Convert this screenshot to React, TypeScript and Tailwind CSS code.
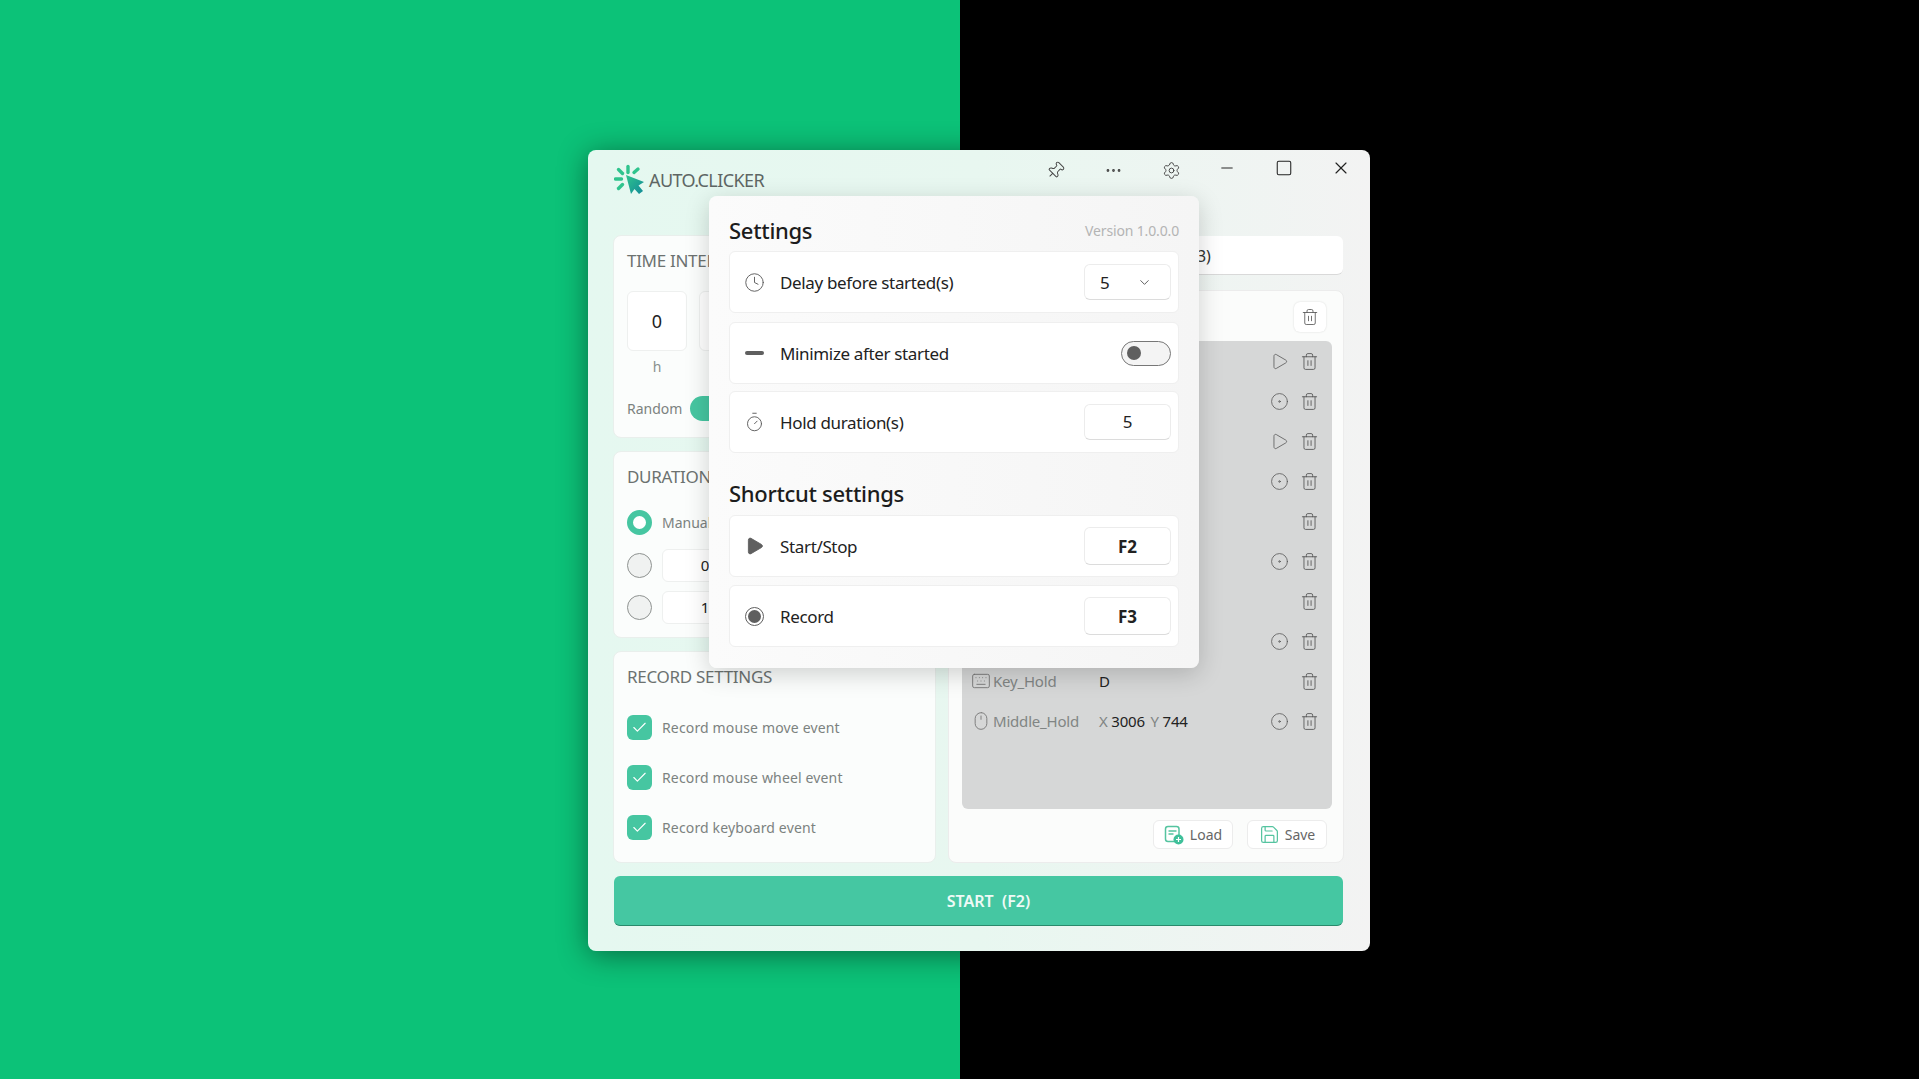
import { Check, ChevronDown, CircleDot, Clock, Ellipsis, Keyboard, Minus, Mouse, Pin, Play, Save, Settings, Square, Timer, Trash2, X } from 'lucide-react';

const rows = [
  { action: 'play' },
  { action: 'target' },
  { action: 'play' },
  { action: 'target' },
  { action: 'none' },
  { action: 'target' },
  { action: 'none' },
  { action: 'target' },
  { action: 'none', icon: 'key', name: 'Key_Hold', key: 'D' },
  { action: 'target', icon: 'mouse', name: 'Middle_Hold', x: 3006, y: 744 },
];

function Logo() {
  return (
    <svg width="32" height="32" viewBox="0 0 32 32">
      <defs>
        <linearGradient id="logo" x1="0" y1="0" x2="1" y2="1">
          <stop offset="0" stopColor="#2fc48d" />
          <stop offset="1" stopColor="#128a98" />
        </linearGradient>
      </defs>
      <g stroke="#2fc48d" strokeWidth="3.4" strokeLinecap="round">
        <path d="M14 2.5v6" />
        <path d="M4.5 5.5l4 4" />
        <path d="M24 5l-4 3.5" />
        <path d="M1.5 15h6" />
        <path d="M4.5 24.5l4-4" />
      </g>
      <path d="M12 11l18 7-5.5 3.5 4.5 5.5-4 3-4.5-5-3.5 5z" fill="url(#logo)" />
    </svg>
  );
}

function LoadIcon() {
  return (
    <svg width="20" height="20" viewBox="0 0 20 20" fill="none">
      <rect x="1.5" y="1.5" width="13.5" height="15" rx="2.5" stroke="#55c4a0" strokeWidth="1.5" />
      <path d="M4.5 6h8M4.5 9h5" stroke="#55c4a0" strokeWidth="1.5" />
      <circle cx="14.5" cy="14.5" r="5" fill="#3fc09a" />
      <path d="M14.5 12v5M12 14.5h5" stroke="#fff" strokeWidth="1.2" />
    </svg>
  );
}

function Card({ title, className, children }: { title: string; className: string; children: React.ReactNode }) {
  return (
    <div className={`rounded-lg border border-[#e9efec] bg-[#fbfdfc] px-[13px] ${className}`}>
      <div className="pt-[12px] text-[17px] leading-[26px] tracking-[-0.3px] text-[#6c7270]">{title}</div>
      {children}
    </div>
  );
}

function CheckRow({ label }: { label: string }) {
  return (
    <div className="flex items-center gap-[10px]">
      <span className="flex h-[25px] w-[25px] items-center justify-center rounded-md bg-[#46c6a1]">
        <Check className="h-[17px] w-[17px] text-white" strokeWidth={1.6} />
      </span>
      <span className="text-[14px] tracking-[0.15px] text-[#7b8280]">{label}</span>
    </div>
  );
}

function SettingRow({ icon, label, children, className }: { icon: React.ReactNode; label: string; children: React.ReactNode; className: string }) {
  return (
    <div className={`flex h-[62px] items-center rounded-md border border-[#efefef] bg-white pl-[14px] pr-[7px] ${className}`}>
      <span className="flex w-[21px] justify-center text-[#5f5f5f]">{icon}</span>
      <span className="ml-[15px] flex-1 pt-[1px] text-[17px] tracking-[-0.35px] text-[#222]">{label}</span>
      {children}
    </div>
  );
}

function ValueBox({ children, className }: { children: React.ReactNode; className: string }) {
  return (
    <div className={`flex w-[87px] items-center rounded-md border border-[#ececec] border-b-[#dcdcdc] bg-white text-[17px] text-[#222] ${className}`}>
      {children}
    </div>
  );
}

export default function App() {
  return (
    <div className="relative flex h-[1079px] w-full overflow-hidden font-['Noto_Sans',sans-serif]">
      <div className="h-full w-[960px] bg-[#0cc278]" />
      <div className="h-full flex-1 bg-black" />

      <div className="absolute left-[588px] top-[150px] h-[801px] w-[782px] rounded-lg bg-gradient-to-r from-[#e5f8f0] via-[#e8f7f0] to-[#f3f3f3] pl-[25px] pr-[26px] shadow-[0_4px_30px_rgba(0,0,0,0.45)]">
        <div className="flex h-[85px] items-start">
          <div className="ml-[1px] mt-[14px] flex items-center gap-[3px]">
            <Logo />
            <span className="text-[18px] tracking-[-0.6px] text-[#5e6664]">AUTO.CLICKER</span>
          </div>
          <div className="ml-[282px] mt-[11px] flex items-center gap-[39px] text-[#444]">
            <Pin className="h-[19px] w-[19px] rotate-45" strokeWidth={1.2} />
            <Ellipsis className="h-[19px] w-[19px]" strokeWidth={1.5} />
            <Settings className="h-[19px] w-[19px]" strokeWidth={1.2} />
          </div>
          <div className="ml-[37px] mt-[8px] flex items-center gap-[39px] text-[#222]">
            <Minus className="h-[18px] w-[18px]" strokeWidth={1.3} />
            <Square className="h-[18px] w-[18px]" strokeWidth={1.4} />
            <X className="-ml-[1px] h-[20px] w-[20px]" strokeWidth={1.4} />
          </div>
        </div>

        <div className="flex h-[628px] gap-[12px]">
          <div className="flex w-[323px] flex-col gap-[13px]">
            <Card title="TIME INTERVAL" className="h-[203px]">
              <div className="mt-[17px] flex gap-[12px]">
                {['h', 'm', 's'].map((unit, i) => (
                  <div key={unit} className="flex flex-col items-center">
                    <div className="flex h-[60px] w-[60px] items-center justify-center rounded-md border border-[#eef0ef] bg-white text-[18px] text-[#222]">0</div>
                    <span className="mt-[5px] text-[14px] text-[#8a908e]">{i === 0 ? unit : ''}</span>
                  </div>
                ))}
              </div>
              <div className="mt-[19px] flex items-center gap-[8px]">
                <span className="text-[14px] text-[#7b8280]">Random</span>
                <span className="h-[25px] w-[50px] rounded-full bg-[#46c6a1]" />
              </div>
            </Card>

            <Card title="DURATION" className="h-[187px]">
              <div className="mt-[20px] flex flex-col gap-[9px]">
                <div className="mb-[5px] flex h-[25px] items-center gap-[10px]">
                  <span className="h-[25px] w-[25px] rounded-full border-[6px] border-[#46c6a1] bg-white" />
                  <span className="text-[14px] text-[#7b8280]">Manual</span>
                </div>
                <div className="flex items-center gap-[10px]">
                  <span className="h-[25px] w-[25px] rounded-full border border-[#8f9391] bg-[#f0f2f1]" />
                  <div className="flex h-[33px] w-[86px] items-center justify-center rounded-md border border-[#eef0ef] bg-white text-[15px] text-[#222]">0</div>
                </div>
                <div className="flex items-center gap-[10px]">
                  <span className="h-[25px] w-[25px] rounded-full border border-[#8f9391] bg-[#f0f2f1]" />
                  <div className="flex h-[33px] w-[86px] items-center justify-center rounded-md border border-[#eef0ef] bg-white text-[15px] text-[#222]">1</div>
                </div>
              </div>
            </Card>

            <Card title="RECORD SETTINGS" className="h-[212px]">
              <div className="mt-[25px] flex flex-col gap-[25px]">
                <CheckRow label="Record mouse move event" />
                <CheckRow label="Record mouse wheel event" />
                <CheckRow label="Record keyboard event" />
              </div>
            </Card>
          </div>

          <div className="mt-[1px] flex flex-1 flex-col gap-[15px]">
            <div className="mr-[1px] flex h-[39px] items-center justify-center rounded-md border-b border-[#d9d9d9] bg-white pr-[13px] pt-[1px] text-[16px] text-[#333]">START RECORD (F3)</div>
            <div className="flex flex-1 flex-col rounded-lg border border-[#ececec] bg-[#fbfcfb] pl-[13px] pr-[11px]">
              <div className="flex h-[50px] items-center justify-end pr-[6px]">
                <span className="mt-[1px] flex h-[30px] w-[32px] items-center justify-center rounded-md bg-white shadow-[0_0_2px_rgba(0,0,0,0.15)]">
                  <Trash2 className="h-[18px] w-[18px] text-[#555]" strokeWidth={1.1} />
                </span>
              </div>
              <div className="flex h-[468px] flex-col rounded-md bg-[#d6d7d7] pl-[9px] pr-[13px]">
                {rows.map((row, i) => (
                  <div key={i} className="flex h-[40px] items-center text-[15px]">
                    <span className="flex w-[20px] justify-center text-[#777]">
                      {row.icon === 'key' && <Keyboard className="h-[20px] w-[20px]" strokeWidth={1.1} />}
                      {row.icon === 'mouse' && <Mouse className="h-[20px] w-[20px]" strokeWidth={1.1} />}
                    </span>
                    <span className="ml-[2px] w-[106px] tracking-[-0.2px] text-[#818584]">{row.name}</span>
                    {row.key && <span className="text-[#222]">{row.key}</span>}
                    {row.x && (
                      <span className="tracking-[-0.2px] text-[#222]">
                        <span className="text-[#818584]">X</span> {row.x} <span className="ml-[2px] text-[#818584]">Y</span> {row.y}
                      </span>
                    )}
                    <span className="ml-auto flex w-[19px] justify-center text-[#555]">
                      {row.action === 'play' && <Play className="h-[19px] w-[19px]" strokeWidth={1} />}
                      {row.action === 'target' && <CircleDot className="h-[19px] w-[19px]" strokeWidth={1} />}
                    </span>
                    <Trash2 className="ml-[11px] h-[19px] w-[19px] text-[#555]" strokeWidth={1.1} />
                  </div>
                ))}
              </div>
              <div className="mt-[11px] flex justify-end gap-[14px] pr-[5px]">
                <div className="flex h-[29px] w-[80px] items-center justify-center gap-[6px] rounded-md border border-[#ececec] bg-white text-[14px] text-[#666]">
                  <LoadIcon />
                  Load
                </div>
                <div className="flex h-[29px] w-[80px] items-center justify-center gap-[5px] rounded-md border border-[#ececec] bg-white text-[14px] text-[#666]">
                  <Save className="h-[21px] w-[21px] text-[#55c4a0]" strokeWidth={1.4} />
                  Save
                </div>
              </div>
            </div>
          </div>
        </div>

        <div className="ml-[1px] mr-[1px] mt-[13px] flex h-[50px] items-center justify-center rounded-md border-b border-[#2a8a6c] bg-[#45c7a2] pl-[20px] text-[16px] font-semibold text-[#eefaf6]">
          START&nbsp;&nbsp;(F2)
        </div>
      </div>

      <div className="absolute left-[709px] top-[196px] h-[472px] w-[490px] rounded-lg bg-gradient-to-r from-[#fbfbfb] to-[#f5f5f5] px-[20px] shadow-[0_6px_24px_rgba(0,0,0,0.18)]">
        <div className="flex h-[55px] items-end justify-between pb-[6px]">
          <span className="text-[22px] font-medium leading-[30px] tracking-[-0.3px] text-[#1c1c1c]">Settings</span>
          <span className="pb-[4px] text-[14px] tracking-[-0.15px] text-[#b4b4b4]">Version 1.0.0.0</span>
        </div>
        <SettingRow icon={<Clock className="h-[21px] w-[21px]" strokeWidth={1.1} />} label="Delay before started(s)" className="mb-[9px]">
          <ValueBox className="h-[36px] justify-between pl-[15px] pr-[18px]">
            <span className="pt-[2px]">5</span>
            <ChevronDown className="h-[15px] w-[15px] text-[#555]" strokeWidth={1.5} />
          </ValueBox>
        </SettingRow>
        <SettingRow icon={<span className="h-[3.5px] w-[19px] rounded-full bg-[#5f5f5f]" />} label="Minimize after started" className="mb-[7px]">
          <span className="flex h-[25px] w-[50px] items-center rounded-full border border-[#777] bg-[#f4f4f4] pl-[5px]">
            <span className="h-[14px] w-[14px] rounded-full bg-[#5f5f5f]" />
          </span>
        </SettingRow>
        <SettingRow icon={<Timer className="h-[22px] w-[22px]" strokeWidth={1.1} />} label="Hold duration(s)" className="">
          <ValueBox className="h-[36px] justify-center">5</ValueBox>
        </SettingRow>

        <div className="flex h-[62px] items-end pb-[7px]">
          <span className="text-[22px] font-medium leading-[30px] tracking-[-0.3px] text-[#1c1c1c]">Shortcut settings</span>
        </div>
        <SettingRow icon={<Play className="h-[22px] w-[22px] fill-current" strokeWidth={1} />} label="Start/Stop" className="mb-[8px]">
          <ValueBox className="h-[38px] justify-center pt-[2px] font-bold">F2</ValueBox>
        </SettingRow>
        <SettingRow
          icon={
            <span className="flex h-[19px] w-[19px] items-center justify-center rounded-full border border-[#5f5f5f]">
              <span className="h-[13px] w-[13px] rounded-full bg-[#5f5f5f]" />
            </span>
          }
          label="Record"
          className=""
        >
          <ValueBox className="h-[38px] justify-center pt-[2px] font-bold">F3</ValueBox>
        </SettingRow>
      </div>
    </div>
  );
}
